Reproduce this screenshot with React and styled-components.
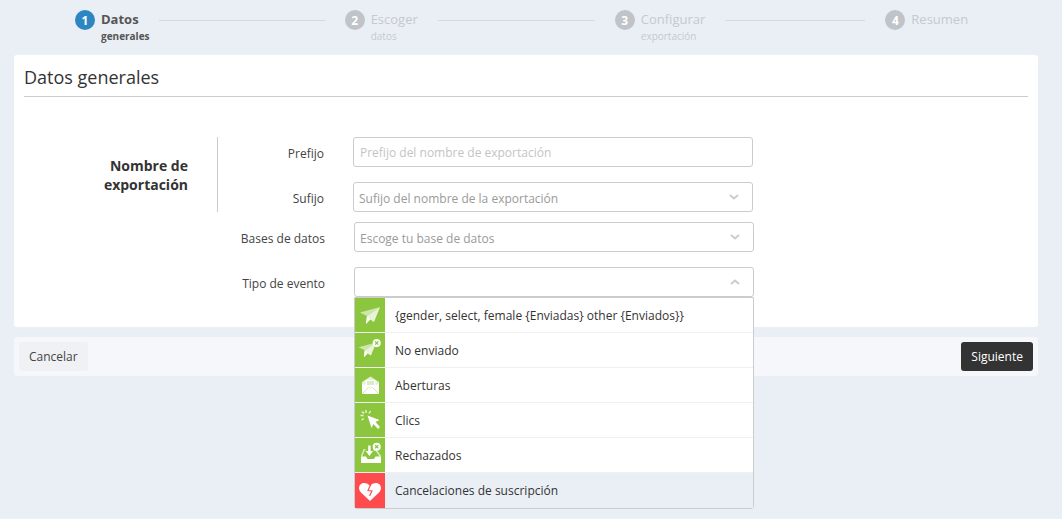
import { Fragment } from "react"
import styled, { createGlobalStyle } from "styled-components"

//STYLES
const Global = createGlobalStyle`
html, body {
  margin: 0;
  padding: 0;
  background: #eaeff6;
  font-family: "Open Sans", "Liberation Sans", sans-serif;
  color: #333;
}
* { box-sizing: border-box; }
`

const Page = styled.div`
  width: 1062px;
  height: 519px;
  overflow: hidden;
  padding: 0 24px 0 14px;
`

const Stepper = styled.div`
  display: flex;
  align-items: flex-start;
  height: 55px;
  padding: 10px 0 0 61px;
`

const Step = styled.div`
  display: flex;
  align-items: flex-start;
  gap: 6px;
  color: ${p => (p.$active ? "#555" : "#c6c9ce")};
`

const StepNumber = styled.div`
  width: 20px;
  height: 20px;
  border-radius: 50%;
  display: flex;
  align-items: center;
  justify-content: center;
  font-size: 12px;
  font-weight: 700;
  color: #fff;
  background: ${p => (p.$active ? "#2e86c1" : "#c0c3c8")};
`

const StepTitle = styled.div`
  font-size: 13px;
  line-height: 18px;
  font-weight: ${p => (p.$active ? 700 : 400)};
`

const StepSub = styled.div`
  width: 0;
  white-space: nowrap;
  font-size: 10px;
  line-height: 14px;
  margin-top: 1px;
  font-weight: ${p => (p.$active ? 700 : 400)};
`

const StepLine = styled.div`
  width: ${p => p.$w}px;
  height: 1px;
  margin: 10px 20px 0;
  background: #d5d9df;
`

const Card = styled.div`
  background: #fff;
  border-radius: 3px;
  padding: 0 10px 30px;
`

const Title = styled.h1`
  margin: 0;
  height: 42px;
  font-size: 18px;
  line-height: 45px;
  font-weight: 400;
  color: #333;
  border-bottom: 1px solid #ccc;
`

const Form = styled.div`
  margin-top: 40px;
  display: flex;
  flex-direction: column;
`

const Group = styled.div`
  display: flex;
  align-items: center;
  margin-bottom: 10px;
`

const Legend = styled.div`
  width: 164px;
  text-align: right;
  font-size: 14px;
  line-height: 19px;
  font-weight: 700;
  color: #333;
  margin-right: 29px;
`

const GroupFields = styled.div`
  border-left: 1px solid #ccc;
  display: flex;
  flex-direction: column;
  gap: 15px;
`

const Row = styled.div`
  display: flex;
  align-items: center;
  margin-bottom: ${p => p.$mb || 0}px;
`

const Label = styled.div`
  width: ${p => p.$w}px;
  margin-right: 29px;
  padding-top: 2px;
  text-align: right;
  font-size: 12px;
  color: #444;
`

const Input = styled.input`
  width: 400px;
  height: 30px;
  padding: 0 6px;
  border: 1px solid #ccc;
  border-radius: 3px;
  outline: none;
  font: 12px "Open Sans", "Liberation Sans", sans-serif;
  &::placeholder { color: #c4c4c4; opacity: 1; }
`

const SelectBox = styled.div`
  position: relative;
  width: 400px;
  height: 30px;
  padding: 2px 12px 0 5px;
  border: 1px solid #ccc;
  border-radius: 3px;
  display: flex;
  align-items: center;
  justify-content: space-between;
  font-size: 12px;
  color: #9a9a9a;
`

const ChevronIcon = styled.svg`
  margin-top: -2px;
`

const Menu = styled.div`
  position: absolute;
  top: 29px;
  left: -1px;
  width: 400px;
  background: #fff;
  border: 1px solid #ccc;
  border-radius: 0 0 3px 3px;
  z-index: 5;
`

const MenuItem = styled.div`
  display: flex;
  align-items: stretch;
  height: 35px;
  border-bottom: 1px solid #f0f0f0;
  background: ${p => (p.$selected ? "#eaeff6" : "#fff")};
  color: #333;
  &:last-child { border-bottom: 0; }
`

const IconTile = styled.div`
  width: 30px;
  flex: none;
  display: flex;
  align-items: center;
  justify-content: center;
  background: ${p => (p.$red ? "#fd4b4e" : "#8cc63e")};
`

const MenuText = styled.div`
  margin-left: 10px;
  align-self: center;
  font-size: 12px;
  white-space: nowrap;
`

const Footer = styled.div`
  margin-top: 10px;
  height: 39px;
  padding: 5px;
  background: #f5f7fb;
  border-radius: 3px;
  display: flex;
  justify-content: space-between;
`

const Button = styled.button`
  height: 29px;
  padding: 0 10px;
  border: 0;
  border-radius: 3px;
  font: 12px "Open Sans", "Liberation Sans", sans-serif;
  color: ${p => (p.$dark ? "#fff" : "#444")};
  background: ${p => (p.$dark ? "#333" : "#eff1f4")};
`
//END STYLES

const Chevron = ({ up }) => (
  <ChevronIcon width="12" height="8" viewBox="0 0 12 8">
    <path d={up ? "M2 6 L6 2.5 L10 6" : "M2 2 L6 5.5 L10 2"} fill="none" stroke="#ccc" strokeWidth="2" />
  </ChevronIcon>
)

const Badge = ({ x, y }) => (
  <g>
    <circle cx={x} cy={y} r="4" fill="#fff" />
    <path d={`M${x - 1.6} ${y - 1.6} l3.2 3.2 M${x + 1.6} ${y - 1.6} l-3.2 3.2`} stroke="#8cc63e" strokeWidth="1.3" />
  </g>
)

const Plane = ({ badge }) => (
  <svg width="26" height="26" viewBox="0 0 26 26">
    <g transform={badge ? "translate(-1 1) scale(.88)" : undefined}>
      <path d="M3 10.5 L23 5 L10 14 Z" fill="#cfe5b0" />
      <path d="M23 5 L10 14 L9 22 L13 17.5 L17 20 Z" fill="#e8f3d8" />
      <path d="M10 14 L9 22 L13 17.5 Z" fill="#fff" />
    </g>
    {badge && <Badge x={19.7} y={6} />}
  </svg>
)

const Envelope = () => (
  <svg width="26" height="26" viewBox="0 0 26 26">
    <path d="M5 10 L13.5 4.5 L22 10 V22 H5 Z" fill="#e4f1d4" />
    <rect x="8.5" y="8" width="10" height="7" fill="#fff" />
    <path d="M10 10 H17 M10 12 H17" stroke="#b9d98f" strokeWidth="1" />
    <path d="M5 11.5 L13.5 16.5 L22 11.5 V22 H5 Z" fill="#fff" />
    <path d="M5 22 L11.5 15.5 M22 22 L15.5 15.5" stroke="#d2e6b6" strokeWidth="1" />
  </svg>
)

const Cursor = () => (
  <svg width="26" height="26" viewBox="0 0 26 26">
    <path d="M10.5 8.5 L22.5 13 L18.5 15 L23 20 L21 22 L16.5 17 L14.5 21 Z" fill="#fff" />
    <path d="M9 3 V6 M3.5 8.5 H6.5 M5 4.5 L7 6.5 M13.5 4 L12 6.5 M4.5 13 L7 11.5" stroke="#e9f4da" strokeWidth="1.4" />
  </svg>
)

const Inbox = () => (
  <svg width="26" height="26" viewBox="0 0 26 26">
    <path d="M8.5 8 H7 L4.5 14.5 M16.5 8 H19 L23.5 14.5" fill="none" stroke="#dcedc6" strokeWidth="1.4" />
    <path d="M4 14.5 H9 L10.5 17 H17 L18.5 14.5 H24 V21 H4 Z" fill="#fff" />
    <path d="M11.2 3.5 H13.6 V9 H16 L12.4 14 L8.8 9 H11.2 Z" fill="#fff" />
    <Badge x={19.7} y={4.7} />
  </svg>
)

const BrokenHeart = () => (
  <svg width="24" height="24" viewBox="0 0 24 24">
    <path
      d="M12 22 L3 13.5 C-0.5 10 1 4 6 4 C8.5 4 10.5 5 12 7 C13.5 5 15.5 4 18 4 C23 4 24.5 10 21 13.5 Z"
      fill="#fff"
    />
    <path d="M12.5 6 L10 11.5 L14 12 L11.5 17" fill="none" stroke="#fd4b4e" strokeWidth="1.2" />
  </svg>
)

const steps = [
  { n: 1, title: "Datos", sub: "generales", line: 166, active: true },
  { n: 2, title: "Escoger", sub: "datos", line: 157 },
  { n: 3, title: "Configurar", sub: "exportación", line: 140 },
  { n: 4, title: "Resumen" },
]

const events = [
  { text: "{gender, select, female {Enviadas} other {Enviados}}", icon: <Plane /> },
  { text: "No enviado", icon: <Plane badge /> },
  { text: "Aberturas", icon: <Envelope /> },
  { text: "Clics", icon: <Cursor /> },
  { text: "Rechazados", icon: <Inbox /> },
  { text: "Cancelaciones de suscripción", icon: <BrokenHeart />, red: true, selected: true },
]

const App = () => {
  return (
    <Page>
      <Global />
      <Stepper>
        {steps.map(s => (
          <Fragment key={s.n}>
            <Step $active={s.active}>
              <StepNumber $active={s.active}>{s.n}</StepNumber>
              <div>
                <StepTitle $active={s.active}>{s.title}</StepTitle>
                {s.sub && <StepSub $active={s.active}>{s.sub}</StepSub>}
              </div>
            </Step>
            {s.line && <StepLine $w={s.line} />}
          </Fragment>
        ))}
      </Stepper>

      <Card>
        <Title>Datos generales</Title>
        <Form>
          <Group>
            <Legend>Nombre de exportación</Legend>
            <GroupFields>
              <Row>
                <Label $w={106}>Prefijo</Label>
                <Input placeholder="Prefijo del nombre de exportación" />
              </Row>
              <Row>
                <Label $w={106}>Sufijo</Label>
                <SelectBox>
                  Sufijo del nombre de la exportación
                  <Chevron />
                </SelectBox>
              </Row>
            </GroupFields>
          </Group>
          <Row $mb={15}>
            <Label $w={301}>Bases de datos</Label>
            <SelectBox>
              Escoge tu base de datos
              <Chevron />
            </SelectBox>
          </Row>
          <Row>
            <Label $w={301}>Tipo de evento</Label>
            <SelectBox>
              <span />
              <Chevron up />
              <Menu>
                {events.map(e => (
                  <MenuItem key={e.text} $selected={e.selected}>
                    <IconTile $red={e.red}>{e.icon}</IconTile>
                    <MenuText>{e.text}</MenuText>
                  </MenuItem>
                ))}
              </Menu>
            </SelectBox>
          </Row>
        </Form>
      </Card>

      <Footer>
        <Button>Cancelar</Button>
        <Button $dark>Siguiente</Button>
      </Footer>
    </Page>
  )
}

export default App
